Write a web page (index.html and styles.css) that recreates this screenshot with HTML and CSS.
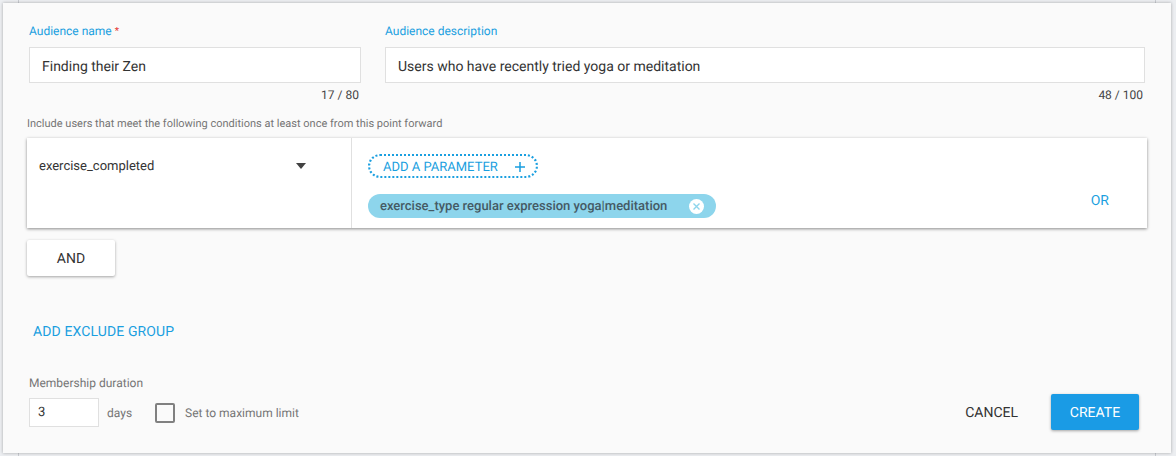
FILE: index.html
```html
<!DOCTYPE html>
<html lang="en">
<head>
<meta charset="utf-8">
<title>Create audience</title>
<link rel="stylesheet" href="styles.css">
</head>
<body>
<div class="backdrop">
  <main class="panel">
    <div class="fields">
      <div class="field field-name">
        <label class="field-label">Audience name<span class="req">*</span></label>
        <div class="text-input">Finding their Zen</div>
        <div class="counter">17 / 80</div>
      </div>
      <div class="field field-desc">
        <label class="field-label">Audience description</label>
        <div class="text-input">Users who have recently tried yoga or meditation</div>
        <div class="counter">48 / 100</div>
      </div>
    </div>
    <p class="hint">Include users that meet the following conditions at least once from this point forward</p>
    <section class="card">
      <div class="event">
        <span>exercise_completed</span>
        <span class="caret"></span>
      </div>
      <div class="params">
        <div class="param-col">
          <button class="add-param"><span>ADD A PARAMETER</span>
            <svg class="plus" width="10" height="10" viewBox="0 0 10 10"><path d="M5 0v10M0 5h10" stroke="#1a9fe0" stroke-width="1.5" fill="none"/></svg>
          </button>
          <div class="chip">
            <span>exercise_type regular expression yoga|meditation</span>
            <svg class="chip-x" width="15" height="15" viewBox="0 0 15 15"><circle cx="7.5" cy="7.5" r="7.5" fill="#fff"/><path d="M4.5 4.5l6 6M10.5 4.5l-6 6" stroke="#8dd5ec" stroke-width="1.4" fill="none"/></svg>
          </div>
        </div>
        <button class="or">OR</button>
      </div>
    </section>
    <button class="and">AND</button>
    <button class="exclude">ADD EXCLUDE GROUP</button>
    <footer class="bottom">
      <div class="membership">
        <div class="duration-label">Membership duration</div>
        <div class="duration-row">
          <div class="days-input">3</div>
          <span class="muted days">days</span>
          <span class="checkbox"></span>
          <span class="muted">Set to maximum limit</span>
        </div>
      </div>
      <div class="actions">
        <button class="cancel">CANCEL</button>
        <button class="create">CREATE</button>
      </div>
    </footer>
  </main>
</div>
</body>
</html>
```

FILE: styles.css
```css
* { box-sizing: border-box; }
html, body { margin: 0; height: 456px; overflow: hidden; }
body {
  font-family: Roboto, "Liberation Sans", sans-serif;
  text-rendering: geometricPrecision;
  background:
    linear-gradient(#c9ccd1, #c9ccd1) 18px 0 / 1px 100% no-repeat,
    linear-gradient(#c9ccd1, #c9ccd1) 1155px 0 / 1px 100% no-repeat,
    #eceef1;
  color: #333;
}
button { font-family: inherit; text-rendering: inherit; border: 0; background: none; padding: 0; cursor: pointer; }
.backdrop { padding: 3px 5px 3px 3px; height: 456px; }
.panel {
  height: 450px;
  background: #fafafa;
  box-shadow: 0 0 3px rgba(0, 0, 0, .3);
  padding: 20px 24px 0 24px;
  display: flex;
  flex-direction: column;
}
.fields { display: flex; gap: 24px; padding: 0 2px; }
.field-name { width: 332px; }
.field-desc { width: 760px; }
.field-label { display: block; height: 16px; font-size: 12px; line-height: 16px; color: #1a9fe0; margin-bottom: 8px; }
.req { color: #e53935; margin-left: 3px; font-size: 10px; line-height: 0; vertical-align: 1px; }
.text-input {
  height: 36px;
  border: 1px solid #e0e0e0;
  background: #fff;
  font-size: 14px;
  line-height: 34px;
  padding: 2px 12px 0;
  color: #333;
}
.counter { font-size: 12px; line-height: 16px; text-align: right; padding: 4px 2px 0 0; color: #444; }
.hint { margin: 14px 0 0; font-size: 11px; line-height: 14px; color: #757575; }
.card {
  margin-top: 7px;
  height: 90px;
  width: 1120px;
  background: #fff;
  display: flex;
  box-shadow: 0 1px 3px rgba(0, 0, 0, .45);
}
.event {
  width: 325px;
  border-right: 1px solid #e0e0e0;
  display: flex;
  justify-content: space-between;
  align-items: flex-start;
  padding: 21px 45px 0 12px;
  font-size: 13px;
  line-height: 16px;
}
.caret {
  margin-top: 4px;
  width: 0; height: 0;
  border-left: 5.5px solid transparent;
  border-right: 5.5px solid transparent;
  border-top: 6px solid #424242;
}
.params { flex: 1; display: flex; justify-content: space-between; align-items: flex-start; padding: 16px 38px 0 16px; }
.param-col { display: flex; flex-direction: column; align-items: flex-start; }
.add-param {
  width: 170px;
  height: 24px;
  border: 2px dotted #1a9fe0;
  border-radius: 12px;
  color: #1a9fe0;
  font-size: 13px;
  display: flex;
  align-items: center;
  justify-content: space-between;
  padding: 2px 11px 0 13px;
}
.chip {
  margin-top: 16px;
  width: 348px;
  height: 24px;
  border-radius: 12px;
  background: #8dd5ec;
  color: #455a64;
  font-size: 13px;
  font-weight: 500;
  display: flex;
  align-items: center;
  justify-content: space-between;
  padding: 0 12px;
}
.or { color: #1a9fe0; font-size: 14px; line-height: 16px; margin-top: 39px; }
.and {
  margin-top: 12px;
  width: 88px;
  height: 36px;
  padding-top: 2px;
  background: #fff;
  border-radius: 2px;
  font-size: 14px;
  color: #333;
  box-shadow: 0 1px 3px rgba(0, 0, 0, .35);
}
.exclude {
  align-self: flex-start;
  margin: 48px 0 0 6px;
  font-size: 14px;
  line-height: 16px;
  letter-spacing: .12px;
  color: #1a9fe0;
}
.bottom { display: flex; justify-content: space-between; align-items: flex-end; margin-top: 35px; padding: 0 8px 0 2px; }
.membership { padding-bottom: 3px; }
.duration-label { font-size: 12px; line-height: 16px; color: #757575; margin-bottom: 7px; }
.duration-row { display: flex; align-items: center; }
.days-input {
  width: 70px; height: 29px;
  border: 1px solid #e0e0e0;
  background: #fff;
  font-size: 13px;
  line-height: 27px;
  padding: 0 8px;
}
.muted { font-size: 12px; color: #757575; }
.days { margin-left: 8px; }
.checkbox {
  width: 20px; height: 20px;
  margin: 0 10px 0 23px;
  border: 2px solid #808080;
  border-radius: 2px;
}
.actions { display: flex; align-items: center; gap: 33px; }
.cancel { font-size: 14px; color: #333; padding-top: 2px; }
.create {
  width: 88px; height: 36px;
  padding-top: 2px;
  background: #1a9be5;
  color: #fff;
  font-size: 14px;
  border-radius: 2px;
  box-shadow: 0 1px 3px rgba(0, 0, 0, .35);
}
```
